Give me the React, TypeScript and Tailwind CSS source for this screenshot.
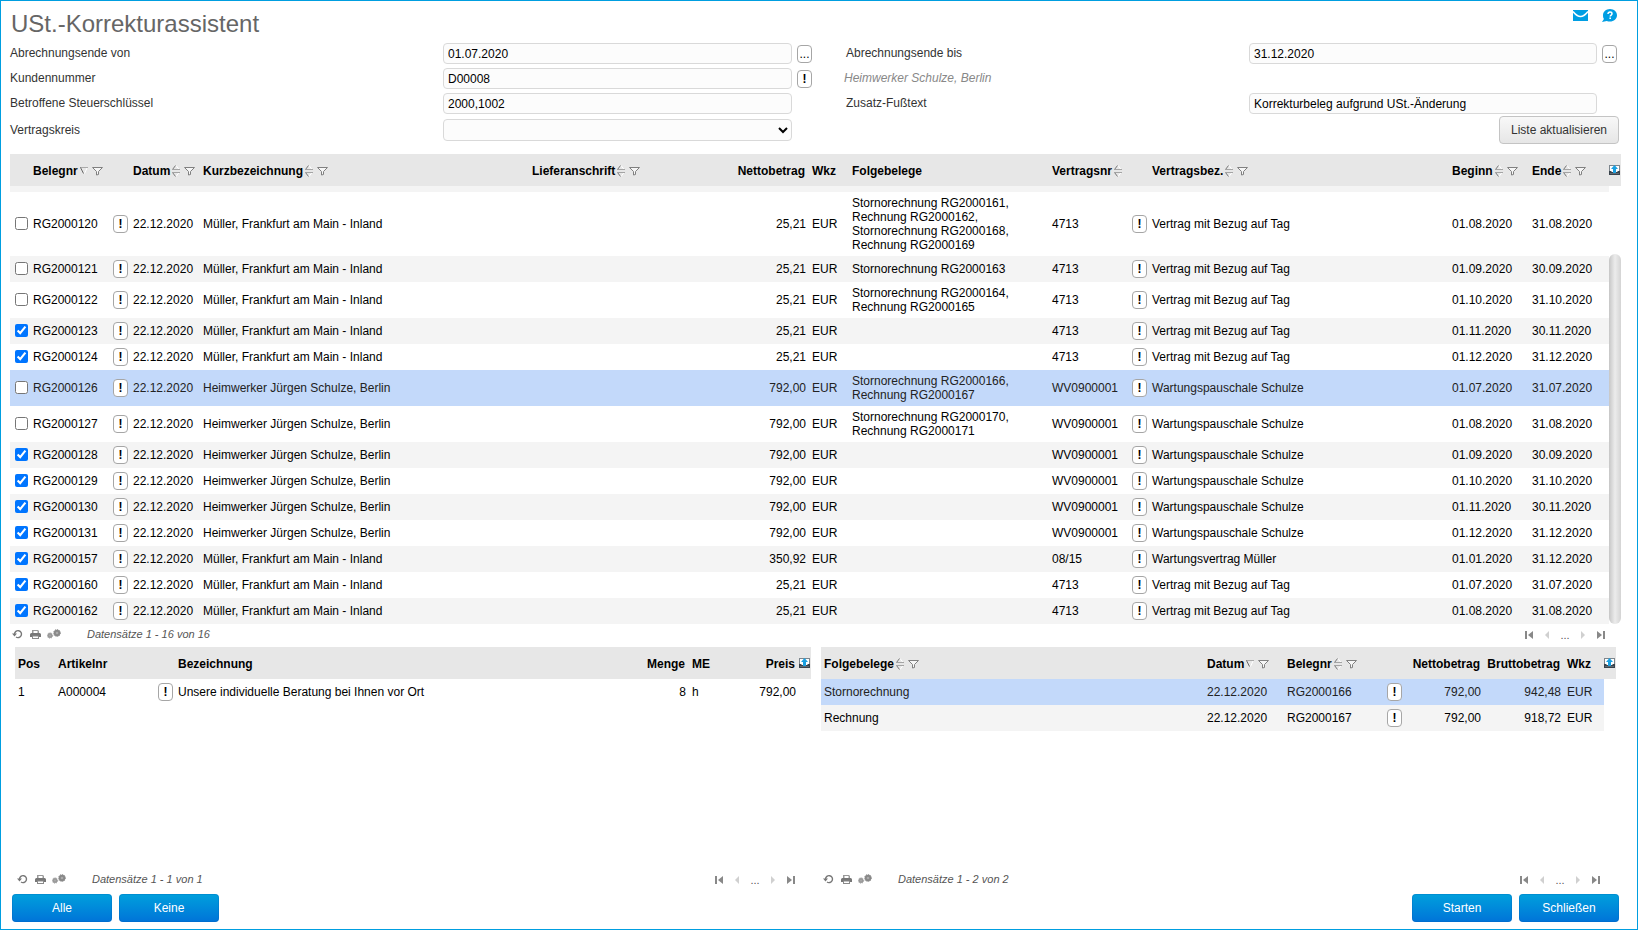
import { useState } from "react";
import type { ReactNode } from "react";

interface Beleg {
  nr: string;
  datum: string;
  name: string;
  betrag: string;
  folge?: string[];
  vertragsnr: string;
  vertrag: string;
  beginn: string;
  ende: string;
  checked?: boolean;
  selected?: boolean;
}

interface Folgebeleg {
  art: string;
  datum: string;
  nr: string;
  netto: string;
  brutto: string;
  selected?: boolean;
}

const MUELLER = "Müller, Frankfurt am Main - Inland";
const SCHULZE = "Heimwerker Jürgen Schulze, Berlin";
const TAG = "Vertrag mit Bezug auf Tag";
const WARTUNG = "Wartungspauschale Schulze";
const DATUM = "22.12.2020";

const BELEGE: Beleg[] = [
  { nr: "RG2000120", datum: DATUM, name: MUELLER, betrag: "25,21", folge: ["Stornorechnung RG2000161,", "Rechnung RG2000162,", "Stornorechnung RG2000168,", "Rechnung RG2000169"], vertragsnr: "4713", vertrag: TAG, beginn: "01.08.2020", ende: "31.08.2020" },
  { nr: "RG2000121", datum: DATUM, name: MUELLER, betrag: "25,21", folge: ["Stornorechnung RG2000163"], vertragsnr: "4713", vertrag: TAG, beginn: "01.09.2020", ende: "30.09.2020" },
  { nr: "RG2000122", datum: DATUM, name: MUELLER, betrag: "25,21", folge: ["Stornorechnung RG2000164,", "Rechnung RG2000165"], vertragsnr: "4713", vertrag: TAG, beginn: "01.10.2020", ende: "31.10.2020" },
  { nr: "RG2000123", datum: DATUM, name: MUELLER, betrag: "25,21", vertragsnr: "4713", vertrag: TAG, beginn: "01.11.2020", ende: "30.11.2020", checked: true },
  { nr: "RG2000124", datum: DATUM, name: MUELLER, betrag: "25,21", vertragsnr: "4713", vertrag: TAG, beginn: "01.12.2020", ende: "31.12.2020", checked: true },
  { nr: "RG2000126", datum: DATUM, name: SCHULZE, betrag: "792,00", folge: ["Stornorechnung RG2000166,", "Rechnung RG2000167"], vertragsnr: "WV0900001", vertrag: WARTUNG, beginn: "01.07.2020", ende: "31.07.2020", selected: true },
  { nr: "RG2000127", datum: DATUM, name: SCHULZE, betrag: "792,00", folge: ["Stornorechnung RG2000170,", "Rechnung RG2000171"], vertragsnr: "WV0900001", vertrag: WARTUNG, beginn: "01.08.2020", ende: "31.08.2020" },
  { nr: "RG2000128", datum: DATUM, name: SCHULZE, betrag: "792,00", vertragsnr: "WV0900001", vertrag: WARTUNG, beginn: "01.09.2020", ende: "30.09.2020", checked: true },
  { nr: "RG2000129", datum: DATUM, name: SCHULZE, betrag: "792,00", vertragsnr: "WV0900001", vertrag: WARTUNG, beginn: "01.10.2020", ende: "31.10.2020", checked: true },
  { nr: "RG2000130", datum: DATUM, name: SCHULZE, betrag: "792,00", vertragsnr: "WV0900001", vertrag: WARTUNG, beginn: "01.11.2020", ende: "30.11.2020", checked: true },
  { nr: "RG2000131", datum: DATUM, name: SCHULZE, betrag: "792,00", vertragsnr: "WV0900001", vertrag: WARTUNG, beginn: "01.12.2020", ende: "31.12.2020", checked: true },
  { nr: "RG2000157", datum: DATUM, name: MUELLER, betrag: "350,92", vertragsnr: "08/15", vertrag: "Wartungsvertrag Müller", beginn: "01.01.2020", ende: "31.12.2020", checked: true },
  { nr: "RG2000160", datum: DATUM, name: MUELLER, betrag: "25,21", vertragsnr: "4713", vertrag: TAG, beginn: "01.07.2020", ende: "31.07.2020", checked: true },
  { nr: "RG2000162", datum: DATUM, name: MUELLER, betrag: "25,21", vertragsnr: "4713", vertrag: TAG, beginn: "01.08.2020", ende: "31.08.2020", checked: true },
];

const FOLGEBELEGE: Folgebeleg[] = [
  { art: "Stornorechnung", datum: DATUM, nr: "RG2000166", netto: "792,00", brutto: "942,48", selected: true },
  { art: "Rechnung", datum: DATUM, nr: "RG2000167", netto: "792,00", brutto: "918,72" },
];

const INPUT = "h-[21px] min-w-0 flex-1 rounded border border-[#d9d9d9] bg-[#fcfcfc] px-1 text-black outline-none";
const TABLE = "w-full table-fixed border-collapse";
const HEAD_ROW = "h-8 bg-[#e7e7e7] text-left text-black";
const CELL = "px-[3px] py-1";

function rowColor(index: number, selected?: boolean) {
  if (selected) return "bg-[#c3d9fa] text-[#222]";
  return index % 2 === 0 ? "bg-white" : "bg-[#f4f4f4]";
}

/* Icons */

function SortIcon() {
  return (
    <svg width="8" height="12" viewBox="0 0 8 12" fill="none" className="shrink-0">
      <path d="M4 .5 7.5 5M4 11.5 7.5 7" stroke="#fff" />
      <path d="M.5 4.5 3.5.5M.5 7.5l3 4" stroke="#777" />
      <path d="M0 4.5h8M0 7.5h8" stroke="#a4a4a4" />
    </svg>
  );
}

function SortDownIcon() {
  return (
    <svg width="8" height="12" viewBox="0 0 8 12" fill="none" className="shrink-0">
      <path d="M4.500 8.500 7.500 2" stroke="#fff" />
      <path d="M0 2.500h8" stroke="#aaa" />
      <path d="M.5 2.500 3.500 8.500" stroke="#666" />
    </svg>
  );
}

function FilterIcon() {
  return (
    <svg width="11" height="10" viewBox="0 0 11 10" fill="none" className="shrink-0">
      <path d="M.5 1.500h10l-4 4v3l-2 .5V5.500z" fill="#f6f6f6" stroke="#808080" />
    </svg>
  );
}

function ColumnsIcon() {
  return (
    <svg width="11" height="10" viewBox="0 0 11 10" className="block">
      <path d="M0 0h11v10H0z" fill="#7d868d" />
      <path d="M1 1h9v6H1z" fill="#fff" />
      <path d="M0 6h2l1 1h5l1-1h2v4H0z" fill="#39434c" />
      <path d="M5.500 0 9 4H7v4H4V4H2z" fill="#1a9fe0" />
      <path d="M1 8h9v1H1z" fill="#5f6a73" />
    </svg>
  );
}

function MailIcon() {
  return (
    <svg width="15" height="11" viewBox="0 0 15 11" className="block">
      <path d="M0 0h15v11H0z" fill="#009ee3" />
      <path d="M0 1.500Q4 6.500 7.500 6.500T15 1.500" fill="none" stroke="#fff" strokeWidth="1.500" />
    </svg>
  );
}

function HelpIcon() {
  return (
    <svg width="15" height="13" viewBox="0 0 15 13" className="block">
      <path d="M8 0c3.900 0 7 2.800 7 6.300s-3.100 6.300-7 6.300c-1.200 0-2.300-.2-3.200-.7L0 13l1.900-3A6 6 0 0 1 1 6.300C1 2.800 4.100 0 8 0z" fill="#009ee3" />
      <path d="M6 5c0-1.300.9-1.900 2-1.900s2 .6 2 1.700c0 1.200-1.800 1.300-1.800 2.700" fill="none" stroke="#fff" strokeWidth="1.500" />
      <path d="M7.400 8.600h1.600v1.500H7.400z" fill="#fff" />
    </svg>
  );
}

function ReloadIcon() {
  return (
    <svg width="11" height="10" viewBox="0 0 11 10" className="block">
      <path d="M2.500 5a3.500 3.500 0 1 1 1.500 3" fill="none" stroke="#777" strokeWidth="1.400" />
      <path d="M0 4.500h5L2.500 7.500z" fill="#777" />
    </svg>
  );
}

function PrintIcon() {
  return (
    <svg width="11" height="10" viewBox="0 0 11 10" className="block">
      <path d="M3 1h5l1 1v2H2V1z" fill="#999" />
      <path d="M3.500 2h4v2h-4z" fill="#fff" />
      <path d="M1.500 4h8A1.500 1.500 0 0 1 11 5.500V8H0V5.500A1.500 1.500 0 0 1 1.500 4z" fill="#777" />
      <path d="M2 6.500h7V10H2z" fill="#8a8a8a" />
      <path d="M3 7.500h5V9H3z" fill="#fff" />
    </svg>
  );
}

function GearsIcon() {
  return (
    <svg width="14" height="10" viewBox="0 0 14 10" fill="none" className="block">
      <circle cx="3" cy="6.500" r="2.500" fill="#999" />
      <circle cx="3" cy="6.500" r="2.700" stroke="#999" strokeDasharray="1 1" />
      <circle cx="3" cy="6.500" r="1" fill="#aaa" />
      <circle cx="10" cy="4" r="3.200" fill="#888" />
      <circle cx="10" cy="4" r="3.500" stroke="#888" strokeDasharray="1 1" />
      <circle cx="10" cy="4" r="1.300" fill="#aaa" />
    </svg>
  );
}

function PagerIcon({ bar, flip }: { bar?: boolean; flip?: boolean }) {
  return (
    <svg width="8" height="8" viewBox="0 0 8 8" className={flip ? "block -scale-x-100" : "block"}>
      {bar && <path d="M0 0h2v8H0z" fill="#888" />}
      <path d={bar ? "M8 0v8L3 4z" : "M6 0v8L2 4z"} fill={bar ? "#888" : "#d0d0d0"} />
    </svg>
  );
}

/* Building blocks */

function SmallButton({ children, label }: { children: ReactNode; label: string }) {
  return (
    <button
      aria-label={label}
      className="flex h-[18px] w-[15px] shrink-0 items-center justify-center rounded border border-[#a6a6a6] bg-white leading-[14px] text-black"
    >
      {children}
    </button>
  );
}

function InfoButton() {
  return (
    <SmallButton label="Details">
      <b>!</b>
    </SmallButton>
  );
}

function Head({ children, sort, filter, right }: { children?: ReactNode; sort?: "none" | "down"; filter?: boolean; right?: boolean }) {
  return (
    <th className={right ? "pt-0.5 pr-1" : "px-[3px] pt-0.5"}>
      <span className={right ? "flex items-center justify-end" : "flex items-center"}>
        {children}
        {sort && (
          <button aria-label="Sortieren" className="ml-[2px]">
            {sort === "down" ? <SortDownIcon /> : <SortIcon />}
          </button>
        )}
        {filter && (
          <button aria-label="Filtern" className="ml-1">
            <FilterIcon />
          </button>
        )}
      </span>
    </th>
  );
}

function ColumnsHead() {
  return (
    <th className="p-0">
      <button aria-label="Spalten" className="block">
        <ColumnsIcon />
      </button>
    </th>
  );
}

function StatusBar({ text }: { text: string }) {
  return (
    <div className="flex h-5 items-center text-[11px] text-[#555]">
      <button aria-label="Neu laden" className="flex w-[15px] justify-center"><ReloadIcon /></button>
      <button aria-label="Drucken" className="flex w-5 justify-center"><PrintIcon /></button>
      <button aria-label="Einstellungen" className="flex w-[18px] justify-center"><GearsIcon /></button>
      <span className="ml-6 italic">{text}</span>
      <div className="ml-auto flex items-center pt-0.5">
        <button aria-label="Erste Seite" className="flex w-[18px] justify-center"><PagerIcon bar /></button>
        <button aria-label="Vorherige Seite" className="flex w-[18px] justify-center"><PagerIcon /></button>
        <span className="w-[18px] text-center">...</span>
        <button aria-label="Nächste Seite" className="flex w-[18px] justify-center"><PagerIcon flip /></button>
        <button aria-label="Letzte Seite" className="flex w-[18px] justify-center"><PagerIcon bar flip /></button>
      </div>
    </div>
  );
}

function ActionButton({ children }: { children: ReactNode }) {
  return (
    <button className="h-7 w-[100px] rounded bg-linear-to-b from-[#00a0dc] to-[#0073d8] text-white shadow-[inset_0_0_0_1px_rgba(0,90,180,0.25)]">
      {children}
    </button>
  );
}

function Filters() {
  return (
    <form
      className="grid grid-cols-[433fr_369fr_34px_403fr_368fr] grid-rows-[25px_25px_25px_28px] items-center text-[#333]"
      onSubmit={(e) => e.preventDefault()}
    >
      <label htmlFor="von" className="pb-0.5">Abrechnungsende von</label>
      <div className="flex items-center gap-[5px]">
        <input id="von" className={INPUT} defaultValue="01.07.2020" />
        <SmallButton label="Datum wählen">...</SmallButton>
      </div>
      <span />
      <label htmlFor="bis" className="pb-0.5">Abrechnungsende bis</label>
      <div className="flex items-center gap-[5px]">
        <input id="bis" className={INPUT} defaultValue="31.12.2020" />
        <SmallButton label="Datum wählen">...</SmallButton>
      </div>

      <label htmlFor="kunde" className="pb-0.5">Kundennummer</label>
      <div className="flex items-center gap-[5px]">
        <input id="kunde" className={INPUT} defaultValue="D00008" />
        <InfoButton />
      </div>
      <span className="col-span-3 pb-0.5 pl-8 text-[#888] italic">Heimwerker Schulze, Berlin</span>

      <label htmlFor="steuer" className="pb-0.5">Betroffene Steuerschlüssel</label>
      <div className="flex pr-5">
        <input id="steuer" className={INPUT} defaultValue="2000,1002" />
      </div>
      <span />
      <label htmlFor="fusstext" className="pb-0.5">Zusatz-Fußtext</label>
      <div className="flex pr-5">
        <input id="fusstext" className={INPUT} defaultValue="Korrekturbeleg aufgrund USt.-Änderung" />
      </div>

      <label htmlFor="kreis">Vertragskreis</label>
      <div className="flex pr-5">
        <select id="kreis" className="h-[22px] min-w-0 flex-1 rounded border border-[#d9d9d9] bg-[#fcfcfc] text-black">
          <option></option>
        </select>
      </div>
      <button className="col-span-3 -mr-0.5 h-7 w-[120px] justify-self-end rounded border border-[#c4c4c4] bg-linear-to-b from-[#f8f8f8] to-[#e6e6e6]">
        Liste aktualisieren
      </button>
    </form>
  );
}

function BelegCols() {
  return (
    <colgroup>
      <col className="w-5" />
      <col className="w-20" />
      <col className="w-5" />
      <col className="w-[70px]" />
      <col />
      <col className="w-[200px]" />
      <col className="w-20" />
      <col className="w-10" />
      <col className="w-[200px]" />
      <col className="w-20" />
      <col className="w-5" />
      <col className="w-[300px]" />
      <col className="w-20" />
      <col className="w-20" />
    </colgroup>
  );
}

function BelegList() {
  const [checked, setChecked] = useState(BELEGE.filter((b) => b.checked).map((b) => b.nr));

  const toggle = (nr: string) =>
    setChecked((prev) => (prev.includes(nr) ? prev.filter((n) => n !== nr) : [...prev, nr]));

  return (
    <section className="mt-[10px]">
      <div className="flex items-center bg-[#e7e7e7]">
        <table className={TABLE}>
          <BelegCols />
          <thead>
            <tr className={HEAD_ROW}>
              <Head />
              <Head sort="down" filter>Belegnr</Head>
              <Head />
              <Head sort="none" filter>Datum</Head>
              <Head sort="none" filter>Kurzbezeichnung</Head>
              <Head sort="none" filter>Lieferanschrift</Head>
              <Head right>Nettobetrag</Head>
              <Head>Wkz</Head>
              <Head>Folgebelege</Head>
              <Head sort="none">Vertragsnr</Head>
              <Head />
              <Head sort="none" filter>Vertragsbez.</Head>
              <Head sort="none" filter>Beginn</Head>
              <Head sort="none" filter>Ende</Head>
            </tr>
          </thead>
        </table>
        <button aria-label="Spalten" className="w-3 shrink-0">
          <ColumnsIcon />
        </button>
      </div>

      <div className="flex">
        <div className="min-w-0 flex-1 bg-[#f4f4f4] pt-1.5">
          <table className={TABLE}>
            <BelegCols />
            <tbody>
              {BELEGE.map((b, i) => (
                <tr key={b.nr} className={rowColor(i, b.selected)}>
                  <td className="pt-1 pb-[5px] pl-[5px]">
                    <input
                      type="checkbox"
                      aria-label={b.nr}
                      className="block size-[13px]"
                      checked={checked.includes(b.nr)}
                      onChange={() => toggle(b.nr)}
                    />
                  </td>
                  <td className={CELL}>{b.nr}</td>
                  <td className={CELL}><InfoButton /></td>
                  <td className={CELL}>{b.datum}</td>
                  <td className={CELL}>{b.name}</td>
                  <td className={CELL}></td>
                  <td className={`${CELL} text-right`}>{b.betrag}</td>
                  <td className={CELL}>EUR</td>
                  <td className={CELL}>
                    {b.folge?.map((f) => <div key={f}>{f}</div>)}
                  </td>
                  <td className={CELL}>{b.vertragsnr}</td>
                  <td className={CELL}><InfoButton /></td>
                  <td className={CELL}>{b.vertrag}</td>
                  <td className={CELL}>{b.beginn}</td>
                  <td className={CELL}>{b.ende}</td>
                </tr>
              ))}
            </tbody>
          </table>
        </div>
        {/* Scrollbar, at its end */}
        <div className="flex w-3 shrink-0 flex-col justify-end pt-[68px]">
          <div className="flex-1 rounded-full bg-linear-to-r from-[#c6c6c6] via-[#ececec] to-[#d4d4d4]" />
        </div>
      </div>
      <div className="pr-[11px]">
        <StatusBar text="Datensätze 1 - 16 von 16" />
      </div>
    </section>
  );
}

function Positionen() {
  return (
    <section className="flex flex-col">
      <table className={TABLE}>
        <colgroup>
          <col className="w-10" />
          <col className="w-[100px]" />
          <col className="w-5" />
          <col />
          <col className="w-20" />
          <col className="w-10" />
          <col className="w-[70px]" />
          <col className="w-3" />
        </colgroup>
        <thead>
          <tr className={HEAD_ROW}>
            <Head>Pos</Head>
            <Head>Artikelnr</Head>
            <Head />
            <Head>Bezeichnung</Head>
            <Head right>Menge</Head>
            <Head>ME</Head>
            <Head right>Preis</Head>
            <ColumnsHead />
          </tr>
        </thead>
        <tbody>
          <tr>
            <td className={CELL}>1</td>
            <td className={CELL}>A000004</td>
            <td className={CELL}><InfoButton /></td>
            <td className={CELL}>Unsere individuelle Beratung bei Ihnen vor Ort</td>
            <td className={`${CELL} text-right`}>8</td>
            <td className={CELL}>h</td>
            <td className={`${CELL} text-right`}>792,00</td>
            <td></td>
          </tr>
        </tbody>
      </table>
      <div className="mt-auto pr-[11px]">
        <StatusBar text="Datensätze 1 - 1 von 1" />
      </div>
    </section>
  );
}

function Folgebelege() {
  return (
    <section className="flex flex-col">
      <table className={TABLE}>
        <colgroup>
          <col />
          <col className="w-20" />
          <col className="w-[100px]" />
          <col className="w-5" />
          <col className="w-20" />
          <col className="w-20" />
          <col className="w-10" />
          <col className="w-3" />
        </colgroup>
        <thead>
          <tr className={HEAD_ROW}>
            <Head sort="none" filter>Folgebelege</Head>
            <Head sort="down" filter>Datum</Head>
            <Head sort="none" filter>Belegnr</Head>
            <Head />
            <Head right>Nettobetrag</Head>
            <Head right>Bruttobetrag</Head>
            <Head>Wkz</Head>
            <ColumnsHead />
          </tr>
        </thead>
        <tbody>
          {FOLGEBELEGE.map((f, i) => {
            const cell = `${CELL} ${rowColor(i, f.selected)}`;
            return (
              <tr key={f.nr}>
                <td className={cell}>{f.art}</td>
                <td className={cell}>{f.datum}</td>
                <td className={cell}>{f.nr}</td>
                <td className={cell}><InfoButton /></td>
                <td className={`${cell} text-right`}>{f.netto}</td>
                <td className={`${cell} text-right`}>{f.brutto}</td>
                <td className={cell}>EUR</td>
                <td></td>
              </tr>
            );
          })}
        </tbody>
      </table>
      <div className="mt-auto pr-[11px]">
        <StatusBar text="Datensätze 1 - 2 von 2" />
      </div>
    </section>
  );
}

export default function App() {
  return (
    <div className="flex min-h-screen flex-col border border-[#009ee0] bg-white font-['Liberation_Sans',Arial,sans-serif] text-[12px] leading-[14px] text-black">
      <header className="flex h-10 items-start justify-between pr-5 pl-[10px]">
        <h1 className="pt-2 text-[24px] leading-[30px] text-[#666]">USt.-Korrekturassistent</h1>
        <div className="flex items-center gap-[14px] pt-2">
          <a href="#mail" aria-label="Nachricht"><MailIcon /></a>
          <a href="#hilfe" aria-label="Hilfe"><HelpIcon /></a>
        </div>
      </header>

      <main className="flex flex-1 flex-col pl-[9px]">
        <div className="pr-5">
          <Filters />
        </div>
        <div className="pr-4">
          <BelegList />
        </div>
        <div className="mt-[3px] grid flex-1 grid-cols-[796fr_795fr] gap-[10px] pr-[21px] pl-[5px]">
          <Positionen />
          <Folgebelege />
        </div>
      </main>

      <footer className="flex gap-[7px] pt-[5px] pr-[18px] pb-[7px] pl-[11px]">
        <ActionButton>Alle</ActionButton>
        <ActionButton>Keine</ActionButton>
        <span className="flex-1" />
        <ActionButton>Starten</ActionButton>
        <ActionButton>Schließen</ActionButton>
      </footer>
    </div>
  );
}
